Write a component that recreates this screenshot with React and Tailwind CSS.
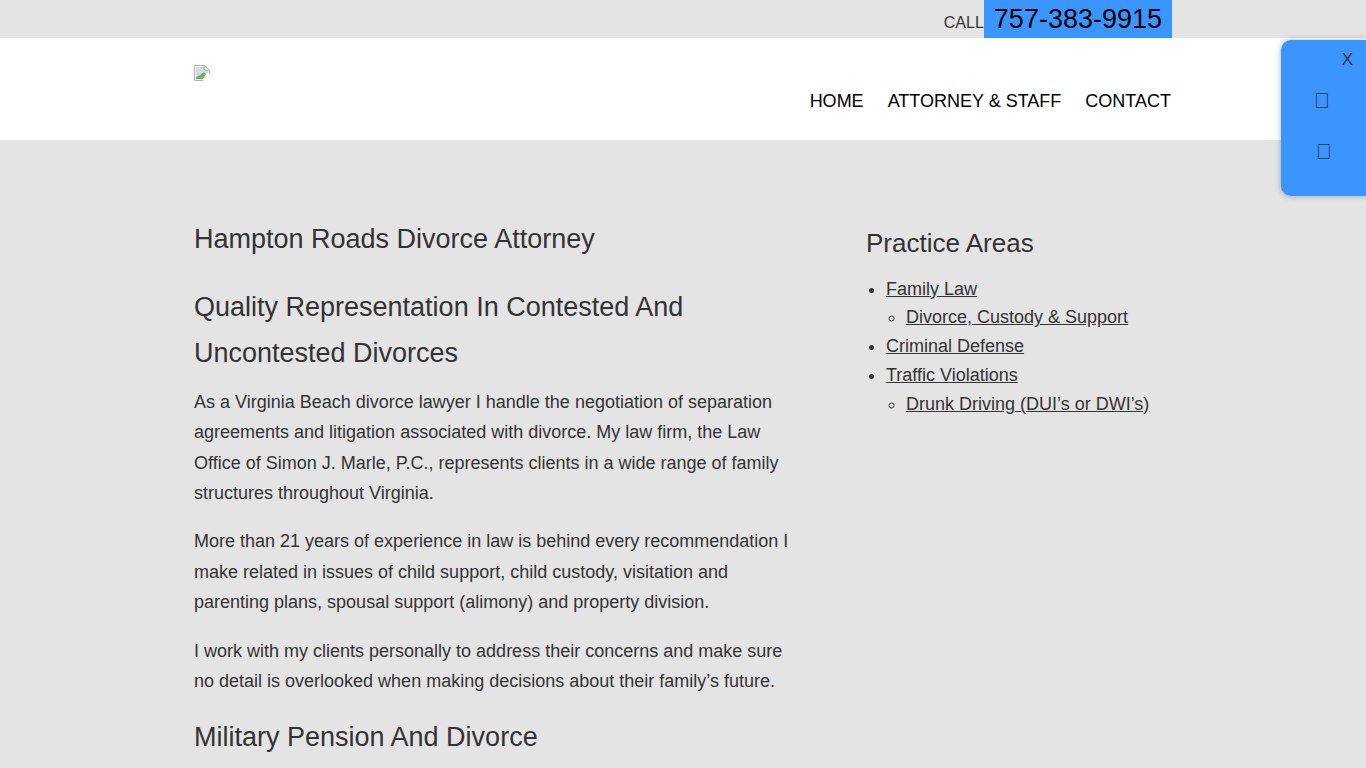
import React from 'react';

const Li = ({ children }) => <a href="#" className="underline">{children}</a>;

const BrokenImage = () => (
    <svg width="16" height="16" viewBox="0 0 16 16" className="block">
        <path d="M0.5 0.5H10.5L15.5 5.5V15.5H0.5Z" fill="#fff" stroke="#b4b4b4" />
        <path d="M2 2H10V6H14V13H2Z" fill="#cfdcf0" />
        <path d="M2 14V12L6 10L10 7L12 9L9 14Z" fill="#6fb35e" />
        <path d="M10.5 0.5V5.5H15.5Z" fill="#f2f2f2" stroke="#b4b4b4" />
        <path d="M12 8L16 9V16H9L12 12Z" fill="#fff" />
    </svg>
);

const App = () => {
    return (
        <div className="relative h-screen overflow-hidden bg-[#e4e4e4] text-[#333] font-['Liberation_Sans',Arial,sans-serif]">
            <div className="h-[38px] flex justify-center">
                <div className="w-[978px] flex justify-end items-end">
                    <span className="text-[16px] leading-[30px]">CALL</span>
                    <a className="bg-[#3a95ff] text-black text-[27px] leading-[38px] px-[10px] h-[38px]">757-383-9915</a>
                </div>
            </div>
            <header className="h-[102px] bg-white flex justify-center">
                <div className="w-[978px] flex justify-between">
                    <div className="pt-[27px]"><BrokenImage /></div>
                    <nav className="flex gap-[24px] pt-[51px] pr-px text-[18px] leading-[24px] text-black">
                        <a>HOME</a>
                        <a>ATTORNEY &amp; STAFF</a>
                        <a>CONTACT</a>
                    </nav>
                </div>
            </header>
            <main className="flex justify-center pt-[79px]">
                <div className="w-[978px] flex justify-between">
                    <div className="w-[606px]">
                        <h1 className="text-[27px] leading-[40px] mb-[25px]">Hampton Roads Divorce Attorney</h1>
                        <h2 className="text-[27px] leading-[46px] mb-[10.8px]">Quality Representation In Contested And Uncontested Divorces</h2>
                        <p className="text-[18px] leading-[30.4px] mb-[18px]">As a Virginia Beach divorce lawyer I handle the negotiation of separation agreements and litigation associated with divorce. My law firm, the Law Office of Simon J. Marle, P.C., represents clients in a wide range of family structures throughout Virginia.</p>
                        <p className="text-[18px] leading-[30.4px] mb-[18px]">More than 21 years of experience in law is behind every recommendation I make related in issues of child support, child custody, visitation and parenting plans, spousal support (alimony) and property division.</p>
                        <p className="text-[18px] leading-[30.4px] mb-[18px]">I work with my clients personally to address their concerns and make sure no detail is overlooked when making decisions about their family’s future.</p>
                        <h2 className="text-[27px] leading-[46px]">Military Pension And Divorce</h2>
                    </div>
                    <aside className="w-[306px] pt-[4px]">
                        <h3 className="text-[26px] leading-[40px] mb-[11.65px]">Practice Areas</h3>
                        <ul className="list-disc pl-[20px] text-[18px] leading-[28.8px]">
                            <li><Li>Family Law</Li>
                                <ul className="list-[circle] pl-[20px]">
                                    <li><Li>Divorce, Custody &amp; Support</Li></li>
                                </ul>
                            </li>
                            <li><Li>Criminal Defense</Li></li>
                            <li><Li>Traffic Violations</Li>
                                <ul className="list-[circle] pl-[20px]">
                                    <li><Li>Drunk Driving (DUI’s or DWI’s)</Li></li>
                                </ul>
                            </li>
                        </ul>
                    </aside>
                </div>
            </main>
            <div className="absolute right-0 top-[40px] w-[85px] h-[156px] bg-[#3a95ff] rounded-l-[10px] shadow-[0_0_6px_rgba(0,0,0,0.3)] text-[#333]">
                <span className="absolute right-[13px] top-[10px] text-[17px] leading-[20px]">X</span>
                <span className="absolute left-[33px] top-[51px] text-[21px] leading-[20px]">{'\uf095'}</span>
                <span className="absolute left-[35px] top-[102px] text-[21px] leading-[20px]">{'\uf0e0'}</span>
            </div>
        </div>
    );
};

export default App;
